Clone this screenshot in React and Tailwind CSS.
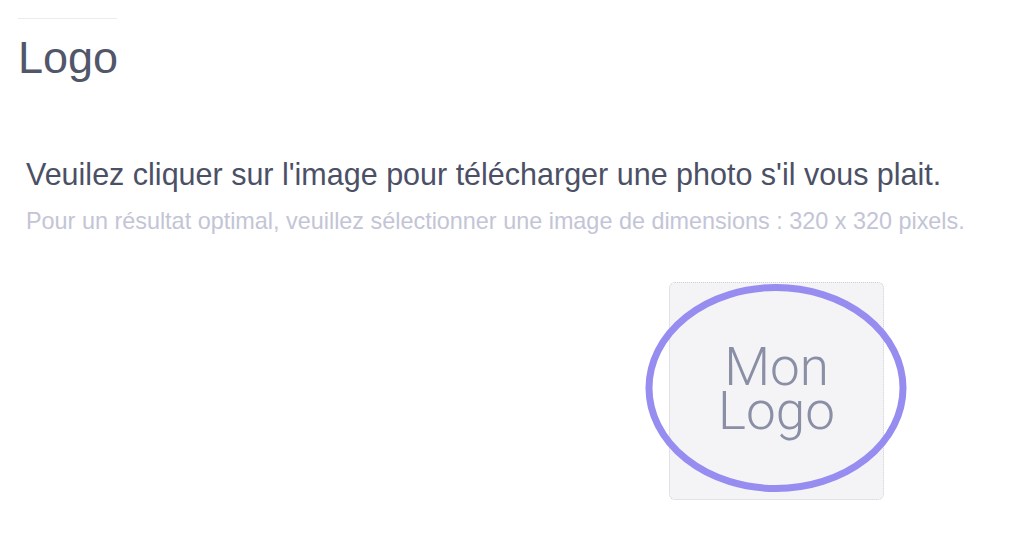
export default function App() {
  return (
    <div className="w-[1024px] h-[537px] bg-white font-['Liberation_Sans',Arial,sans-serif] overflow-hidden">
      <div className="pl-[18px] pt-[18px]">
        <div className="w-[99px] h-px bg-[#ececee]" />
        <h1 className="mt-[16px] text-[45px] leading-none text-[#515669]">Logo</h1>
      </div>

      <div className="pl-[26px] mt-[76px]">
        <p className="text-[30.5px] leading-[36px] text-[#4b5066] whitespace-nowrap">
          Veuilez cliquer sur l'image pour télécharger une photo s'il vous plait.
        </p>
        <p className="mt-[15px] text-[23.4px] leading-[28px] text-[#c3c5d6] whitespace-nowrap">
          Pour un résultat optimal, veuillez sélectionner une image de dimensions : 320 x 320 pixels.
        </p>
      </div>

      <div className="mt-[47px] ml-[669px] relative w-[215px] h-[218px]">
        <div className="w-full h-full rounded-md border border-dotted border-[#cfd0d6] bg-[#f4f4f6] flex flex-col items-center justify-center pb-[4px]">
          <span className="block font-['Roboto',sans-serif] font-light text-[53px] leading-[44px] text-[#8a8fa6]">Mon</span>
          <span className="block font-['Roboto',sans-serif] font-light text-[53px] leading-[44px] text-[#8a8fa6]">Logo</span>
        </div>
        <svg className="absolute left-[-24px] top-[2px] pointer-events-none" width="262" height="208" viewBox="0 0 262 208">
          <ellipse cx="131" cy="104" rx="127" ry="100.5" fill="none" stroke="#978cf0" strokeWidth="7" />
        </svg>
      </div>
    </div>
  );
}
